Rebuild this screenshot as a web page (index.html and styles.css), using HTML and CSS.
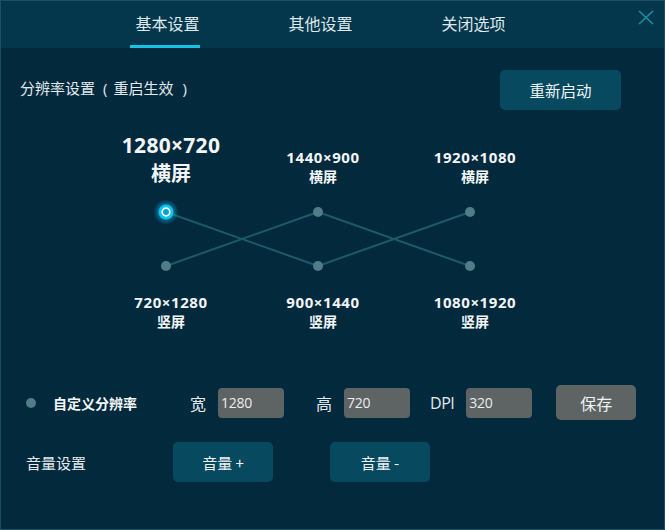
FILE: index.html
```html
<!DOCTYPE html>
<html lang="zh-CN">
<head>
<meta charset="utf-8">
<title>设置</title>
<link rel="stylesheet" href="styles.css">
</head>
<body>
<div class="window">
  <div class="header">
    <div class="tabs">
      <div class="tab active">基本设置</div>
      <div class="tab">其他设置</div>
      <div class="tab">关闭选项</div>
    </div>
    <div class="close">
      <svg width="16" height="15" viewBox="0 0 16 15"><path d="M1 1 L15 14 M15 1 L1 14" stroke="#1b8ea6" stroke-width="1.6" fill="none"/></svg>
    </div>
  </div>

  <div class="title-row">
    <div class="title">分辨率设置<span class="paren open">(</span>重启生效<span class="paren close-p">)</span></div>
    <div class="btn restart">重新启动</div>
  </div>

  <div class="diagram">
    <div class="cell top big"><div class="res">1280×720</div><div class="ori">横屏</div></div>
    <div class="cell top"><div class="res">1440×900</div><div class="ori">横屏</div></div>
    <div class="cell top"><div class="res">1920×1080</div><div class="ori">横屏</div></div>
    <svg class="links" width="456" height="104" viewBox="0 0 456 104">
      <defs>
        <radialGradient id="glow" cx="50%" cy="50%" r="50%">
          <stop offset="0%" stop-color="#19d4ff" stop-opacity="0.9"/>
          <stop offset="55%" stop-color="#0fb8ee" stop-opacity="0.5"/>
          <stop offset="100%" stop-color="#0a90c8" stop-opacity="0"/>
        </radialGradient>
      </defs>
      <g stroke="#1d5a69" stroke-width="2" fill="none">
        <line x1="76" y1="26" x2="228" y2="80"/>
        <line x1="76" y1="80" x2="228" y2="26"/>
        <line x1="228" y1="26" x2="380" y2="80"/>
        <line x1="228" y1="80" x2="380" y2="26"/>
      </g>
      <g fill="#4f7d88">
        <circle cx="228" cy="26" r="5"/>
        <circle cx="380" cy="26" r="5"/>
        <circle cx="76" cy="80" r="5"/>
        <circle cx="228" cy="80" r="5"/>
        <circle cx="380" cy="80" r="5"/>
      </g>
      <circle cx="76" cy="26" r="13" fill="url(#glow)"/>
      <circle cx="76" cy="26" r="7.5" fill="#06c6f4"/>
      <circle cx="76" cy="26" r="3.8" fill="#0a9fd4" stroke="#ffffff" stroke-width="1.7"/>
    </svg>
    <div class="cell bottom"><div class="res">720×1280</div><div class="ori">竖屏</div></div>
    <div class="cell bottom"><div class="res">900×1440</div><div class="ori">竖屏</div></div>
    <div class="cell bottom"><div class="res">1080×1920</div><div class="ori">竖屏</div></div>
  </div>

  <div class="custom-row">
    <span class="dot"></span>
    <span class="custom-label">自定义分辨率</span>
    <span class="field-label w-label">宽</span>
    <span class="input">1280</span>
    <span class="field-label h-label">高</span>
    <span class="input">720</span>
    <span class="field-label dpi-label">DPI</span>
    <span class="input">320</span>
    <span class="btn save">保存</span>
  </div>

  <div class="volume-row">
    <span class="volume-label">音量设置</span>
    <span class="btn vol vol-up">音量 +</span>
    <span class="btn vol vol-down">音量 -</span>
  </div>
</div>
</body>
</html>
```

FILE: styles.css
```css
* { box-sizing: border-box; }
html, body {
  margin: 0;
  padding: 0;
  background: #03293d;
}
body {
  font-family: "Noto Sans CJK SC", "Noto Sans", sans-serif;
  color: #e4ecf0;
}
.window {
  width: 665px;
  height: 530px;
  background: #03293d;
  border: 1px solid #1f4e64;
  overflow: hidden;
}
.header {
  height: 47px;
  background: #04374c;
  display: flex;
  align-items: flex-start;
}
.tabs {
  display: flex;
  padding-left: 90px;
}
.tab {
  width: 153px;
  height: 47px;
  font-size: 16px;
  line-height: 44px;
  text-align: center;
  color: #dfe8ed;
  position: relative;
}
.tab.active::after {
  content: "";
  position: absolute;
  left: 39px;
  bottom: 0;
  width: 70px;
  height: 3px;
  background: #18c2e4;
}
.close {
  margin-left: auto;
  margin-right: 10px;
  margin-top: 9px;
  width: 16px;
  height: 15px;
  display: flex;
}
.title-row {
  display: flex;
  align-items: center;
  justify-content: space-between;
  margin-top: 22px;
  padding-left: 19px;
  padding-right: 43px;
}
.title {
  font-size: 15px;
  color: #e2eaee;
  margin-top: -6px;
}
.paren { font-family: "Open Sans", "Noto Sans", sans-serif; }
.paren.open { margin: 0 6px 0 8px; }
.paren.close-p { margin-left: 9px; }
.btn {
  display: flex;
  align-items: center;
  justify-content: center;
  border-radius: 5px;
  color: #eef3f5;
}
.restart {
  width: 121px;
  height: 40px;
  background: #074a60;
  font-size: 15.5px;
}
.diagram {
  display: grid;
  grid-template-columns: 152px 152px 152px;
  grid-template-rows: 74px 104px auto;
  margin-left: 89px;
  margin-top: 2px;
}
.cell {
  display: flex;
  flex-direction: column;
  align-items: center;
  padding-left: 10px;
  font-weight: 700;
  color: #f2f6f8;
}
.cell.top { justify-content: flex-end; padding-bottom: 0; }
.cell .res {
  font-family: "Open Sans", "Noto Sans", sans-serif;
  font-size: 15px;
  letter-spacing: 0.6px;
  line-height: 20px;
}
.cell .ori {
  font-size: 14px;
  line-height: 19px;
}
.cell.big .res {
  font-size: 21px;
  letter-spacing: 0.3px;
  line-height: 27px;
}
.cell.big .ori {
  font-size: 20px;
  line-height: 27px;
}
.links {
  grid-column: 1 / 4;
  grid-row: 2;
  display: block;
}
.cell.bottom { padding-top: 2px; }
.custom-row {
  display: flex;
  align-items: center;
  margin-top: 54px;
  padding-left: 25px;
  height: 35px;
}
.dot {
  width: 10px;
  height: 10px;
  border-radius: 50%;
  background: #4f7d88;
}
.custom-label {
  margin-left: 17px;
  font-size: 14px;
  font-weight: 700;
  color: #f2f6f8;
  width: 84px;
}
.field-label {
  font-size: 16px;
  color: #e2eaee;
}
.w-label { margin-left: 53px; }
.h-label { margin-left: 32px; }
.dpi-label {
  margin-left: 20px;
  font-family: "Open Sans", "Noto Sans", sans-serif;
  font-size: 16px;
  letter-spacing: -0.5px;
}
.input {
  margin-left: 12px;
  width: 66px;
  height: 30px;
  background: #5e6364;
  border-radius: 4px;
  font-family: "Open Sans", "Noto Sans", sans-serif;
  font-size: 14px;
  line-height: 30px;
  padding-left: 3px;
  color: #eaeded;
  letter-spacing: -0.3px;
}
.save {
  margin-left: 24px;
  width: 80px;
  height: 35px;
  background: #5e6364;
  font-size: 16px;
}
.volume-row {
  display: flex;
  align-items: center;
  margin-top: 22px;
  padding-left: 25px;
  height: 40px;
}
.volume-label {
  font-size: 15px;
  width: 147px;
  color: #e2eaee;
}
.vol {
  width: 100px;
  height: 40px;
  background: #074a60;
  font-size: 15px;
}
.vol-down { margin-left: 57px; }
```
